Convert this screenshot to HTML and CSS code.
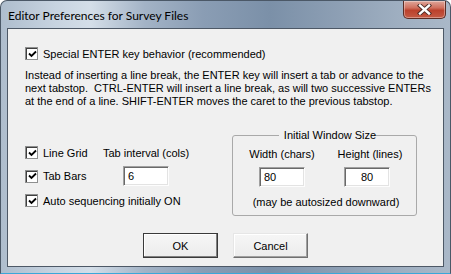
FILE: index.html
```html
<!DOCTYPE html>
<html lang="en">
<head>
  <meta charset="UTF-8" />
  <title>Editor Preferences for Survey Files</title>
  <link rel="stylesheet" href="styles.css">
</head>
<body>

<div class="window">
  <!-- Title bar -->
  <div class="titlebar">
    <span class="title">Editor Preferences for Survey Files</span>
    <button class="close" aria-label="Close">
      <svg width="17" height="11" viewBox="0 0 17 11">
        <path d="M4 1.5 L13 9.5 M13 1.5 L4 9.5" stroke="#4a2a24" stroke-width="4.2" stroke-linecap="square"/>
        <path d="M4 1.5 L13 9.5 M13 1.5 L4 9.5" stroke="#ffffff" stroke-width="2.4" stroke-linecap="square"/>
      </svg>
    </button>
  </div>

  <!-- Client area -->
  <div class="client">
    <label class="check-row">
      <span class="checkbox"><svg width="9" height="9" viewBox="0 0 9 9"><path d="M1 3.5 L3.5 6 L8 1.5" fill="none" stroke="#000" stroke-width="1.8"/></svg></span>
      Special ENTER key behavior (recommended)
    </label>

    <p class="info">Instead of inserting a line break, the ENTER key will insert a tab or advance to the<br>next tabstop.&nbsp; CTRL-ENTER will insert a line break, as will two successive ENTERs<br>at the end of a line. SHIFT-ENTER moves the caret to the previous tabstop.</p>

    <div class="lower">
      <div class="options">
        <label class="check-row">
          <span class="checkbox"><svg width="9" height="9" viewBox="0 0 9 9"><path d="M1 3.5 L3.5 6 L8 1.5" fill="none" stroke="#000" stroke-width="1.8"/></svg></span>
          Line Grid
        </label>
        <span class="tab-label">Tab interval (cols)</span>

        <label class="check-row">
          <span class="checkbox"><svg width="9" height="9" viewBox="0 0 9 9"><path d="M1 3.5 L3.5 6 L8 1.5" fill="none" stroke="#000" stroke-width="1.8"/></svg></span>
          Tab Bars
        </label>
        <input class="field tab-field" type="text" value="6" />

        <label class="check-row wide">
          <span class="checkbox"><svg width="9" height="9" viewBox="0 0 9 9"><path d="M1 3.5 L3.5 6 L8 1.5" fill="none" stroke="#000" stroke-width="1.8"/></svg></span>
          Auto sequencing initially ON
        </label>
      </div>

      <fieldset class="group">
        <legend>Initial Window Size</legend>
        <div class="size-grid">
          <span>Width (chars)</span>
          <span>Height (lines)</span>
          <input class="field" type="text" value="80" />
          <input class="field centered" type="text" value="80" />
          <span class="note">(may be autosized downward)</span>
        </div>
      </fieldset>
    </div>

    <div class="buttons">
      <button class="btn default">OK</button>
      <button class="btn">Cancel</button>
    </div>
  </div>
</div>

</body>
</html>
```

FILE: styles.css
```css
body {
  margin: 0;
  background: #ffffff;
  font-family: "Liberation Sans", Arial, sans-serif;
  font-size: 11px;
  color: #000;
}
.window {
  width: 451px;
  height: 274px;
  box-sizing: border-box;
  border: 1px solid #4b5867;
  border-bottom-color: #3aa7d9;
  border-radius: 7px 7px 0 0;
  padding: 0 6px 6px 6px;
  background: linear-gradient(90deg, #aebdcd 0%, #c7d3e0 12%, #d4dee8 20%, #a3b3c6 32%, #8a9db4 45%, #7b90a8 60%, #8d9fb4 75%, #9eaec0 88%, #aab8c8 100%);
  display: flex;
  flex-direction: column;
}
.titlebar {
  height: 27px;
  display: flex;
  align-items: flex-start;
  justify-content: space-between;
}
.title {
  font-family: Lato, "Noto Sans", sans-serif;
  font-size: 12px;
  padding: 7px 0 0 1px;
}
.close {
  width: 43px;
  height: 18px;
  margin: 0 -2px 0 0;
  padding: 0;
  border: 1px solid #5b2d25;
  border-top: none;
  border-radius: 0 0 5px 5px;
  background: linear-gradient(#dfa79b 0%, #d0705e 40%, #bb412c 55%, #c45a44 100%);
  box-shadow: inset 0 0 0 1px rgba(255,255,255,0.35);
  display: flex;
  align-items: center;
  justify-content: center;
}
.client {
  flex: 1;
  background: #f0f0f0;
  border: 1px solid #4d5866;
  padding-top: 18px;
}
.check-row {
  display: flex;
  align-items: center;
  gap: 5px;
  height: 13px;
  white-space: nowrap;
}
.client > .check-row {
  margin-left: 17px;
}
.checkbox {
  width: 13px;
  height: 13px;
  box-sizing: border-box;
  background: #fff;
  border: 1px solid #8e8f8f;
  box-shadow: inset 1px 1px 0 #3f3f3f;
  display: flex;
  align-items: center;
  justify-content: center;
  padding: 1px 0 0 1px;
}
.info {
  margin: 9px 0 0 17px;
  line-height: 13px;
  white-space: nowrap;
}
.lower {
  display: flex;
  margin: 21px 0 0 17px;
}
.options {
  width: 207px;
  padding-top: 17px;
  display: grid;
  grid-template-columns: 78px 1fr;
  grid-template-rows: 13px 20px 13px;
  row-gap: 7px;
  align-items: center;
}
.options .wide {
  grid-column: 1 / 3;
  margin-top: 2px;
}
.tab-field {
  margin-left: 20px;
}
.field {
  width: 46px;
  height: 20px;
  box-sizing: border-box;
  font-family: "Liberation Sans", Arial, sans-serif;
  font-size: 11px;
  padding: 0 0 0 4px;
  background: #fff;
  border: 1px solid;
  border-color: #a0a0a0 #fdfdfd #fdfdfd #a0a0a0;
  box-shadow: inset 1px 1px 0 #696969, inset -1px -1px 0 #e3e3e3;
  outline: none;
}
.field.centered {
  text-align: center;
  padding: 0;
}
.group {
  width: 185px;
  height: 87px;
  box-sizing: border-box;
  margin: 0;
  padding: 0 0 0 5px;
  border: 1px solid #a9a9a9;
  border-radius: 3px;
}
.group legend {
  margin: 0 auto;
  padding: 0 2px;
  line-height: 13px;
  position: relative;
  left: 3px;
}
.size-grid {
  display: grid;
  grid-template-columns: 88px 88px;
  grid-template-rows: 13px 20px 13px;
  justify-items: center;
  align-items: center;
  padding-top: 5px;
  row-gap: 7px;
}
.size-grid .centered {
  position: relative;
  left: -3px;
}
.size-grid .note {
  grid-column: 1 / 3;
  margin-top: 2px;
  white-space: nowrap;
}
.buttons {
  display: flex;
  justify-content: center;
  gap: 15px;
  margin-top: 17px;
}
.btn {
  width: 75px;
  height: 25px;
  font-family: "Liberation Sans", Arial, sans-serif;
  font-size: 11px;
  color: #000;
  background: linear-gradient(#f6f6f6, #ececec);
  border: 1px solid #a0a0a0;
  border-color: #e6e6e6 #707070 #707070 #e6e6e6;
  box-shadow: inset -1px -1px 0 #a0a0a0, inset 1px 1px 0 #ffffff;
  padding: 0;
}
.btn.default {
  border: 1px solid #3a3a3a;
  box-shadow: inset -1px -1px 0 #808080, inset 1px 1px 0 #ffffff;
}
```
